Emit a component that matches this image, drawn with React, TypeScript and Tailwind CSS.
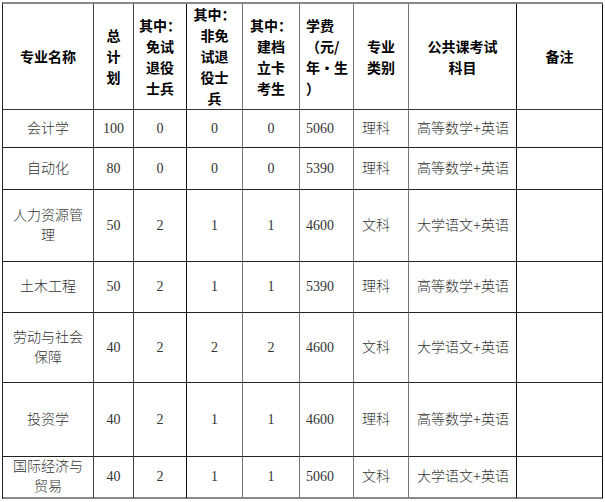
import React from "react";

type Row = {
  name: string[];
  total: string;
  a: string;
  b: string;
  c: string;
  fee: string;
  kind: string;
  exam: string;
  h: string;
};

const rows: Row[] = [
  { name: ["会计学"], total: "100", a: "0", b: "0", c: "0", fee: "5060", kind: "理科", exam: "高等数学+英语", h: "h-[38px]" },
  { name: ["自动化"], total: "80", a: "0", b: "0", c: "0", fee: "5390", kind: "理科", exam: "高等数学+英语", h: "h-[42px]" },
  { name: ["人力资源管", "理"], total: "50", a: "2", b: "1", c: "1", fee: "4600", kind: "文科", exam: "大学语文+英语", h: "h-[72px]" },
  { name: ["土木工程"], total: "50", a: "2", b: "1", c: "1", fee: "5390", kind: "理科", exam: "高等数学+英语", h: "h-[51px]" },
  { name: ["劳动与社会", "保障"], total: "40", a: "2", b: "2", c: "2", fee: "4600", kind: "文科", exam: "大学语文+英语", h: "h-[70px]" },
  { name: ["投资学"], total: "40", a: "2", b: "1", c: "1", fee: "4600", kind: "理科", exam: "高等数学+英语", h: "h-[74px]" },
  { name: ["国际经济与", "贸易"], total: "40", a: "2", b: "1", c: "1", fee: "5060", kind: "文科", exam: "大学语文+英语", h: "h-[41px]" },
];

const head = "font-['Noto_Sans_CJK_SC',sans-serif] font-bold text-[14px] leading-[21px] text-black align-middle p-0";
const body = "font-['Liberation_Serif','Noto_Sans_CJK_SC',serif] font-light text-[14px] leading-[20px] text-[#333] align-middle p-0";

function Lines({ items }: { items: string[] }) {
  return (
    <>
      {items.map((t, i) => (
        <div key={i}>{t}</div>
      ))}
    </>
  );
}

export default function App() {
  return (
    <div className="bg-white w-[605px] h-[502px] pt-[2px] pl-[2px]">
      <table className="table-fixed border-separate border-spacing-0 w-[600px] border-l border-l-[#222] border-t-2 border-t-[#888]">
        <colgroup>
          <col className="w-[91px]" />
          <col className="w-[40px]" />
          <col className="w-[53px]" />
          <col className="w-[56px]" />
          <col className="w-[57px]" />
          <col className="w-[54px]" />
          <col className="w-[55px]" />
          <col className="w-[108px]" />
          <col className="w-[86px]" />
        </colgroup>
        <thead>
          <tr>
            <th className={`${head} h-[102px] text-center border-r border-r-[#444] border-b border-b-[#333]`}>专业名称</th>
            <th className={`${head} text-center border-r border-r-[#444] border-b border-b-[#333]`}>
              <Lines items={["总", "计", "划"]} />
            </th>
            <th className={`${head} text-center border-r border-r-[#111] border-b border-b-[#333]`}>
              <Lines items={["其中：", "免试", "退役", "士兵"]} />
            </th>
            <th className={`${head} text-center border-r border-r-[#777] border-b border-b-[#333]`}>
              <Lines items={["其中：", "非免", "试退", "役士", "兵"]} />
            </th>
            <th className={`${head} text-center border-r border-r-[#777] border-b border-b-[#333]`}>
              <Lines items={["其中：", "建档", "立卡", "考生"]} />
            </th>
            <th className={`${head} text-left pl-[6px] border-r border-r-[#777] border-b border-b-[#333]`}>
              <Lines items={["学费", "（元/", "年·生", "）"]} />
            </th>
            <th className={`${head} text-center border-r border-r-[#777] border-b border-b-[#333]`}>
              <Lines items={["专业", "类别"]} />
            </th>
            <th className={`${head} text-center border-r border-r-[#111] border-b border-b-[#333]`}>
              <Lines items={["公共课考试", "科目"]} />
            </th>
            <th className={`${head} text-center border-r border-r-[#111] border-b border-b-[#333]`}>备注</th>
          </tr>
        </thead>
        <tbody>
          {rows.map((r, i) => {
            const last = i === rows.length - 1;
            const bb = last ? "border-b-2 border-b-[#888]" : "border-b border-b-[#222]";
            return (
              <tr key={i}>
                <td className={`${body} ${r.h} text-center px-2 border-r border-r-[#444] ${bb}`}>
                  <Lines items={r.name} />
                </td>
                <td className={`${body} text-center border-r border-r-[#444] ${bb}`}>{r.total}</td>
                <td className={`${body} text-center border-r border-r-[#111] ${bb}`}>{r.a}</td>
                <td className={`${body} text-center border-r border-r-[#777] ${bb}`}>{r.b}</td>
                <td className={`${body} text-center border-r border-r-[#777] ${bb}`}>{r.c}</td>
                <td className={`${body} text-left pl-[6px] font-['Liberation_Sans',sans-serif] text-[13px] border-r border-r-[#777] ${bb}`}>{r.fee}</td>
                <td className={`${body} text-left pl-[8px] border-r border-r-[#777] ${bb}`}>{r.kind}</td>
                <td className={`${body} text-left pl-[8px] border-r border-r-[#111] ${bb}`}>{r.exam}</td>
                <td className={`${body} border-r border-r-[#111] ${bb}`}></td>
              </tr>
            );
          })}
        </tbody>
      </table>
    </div>
  );
}
